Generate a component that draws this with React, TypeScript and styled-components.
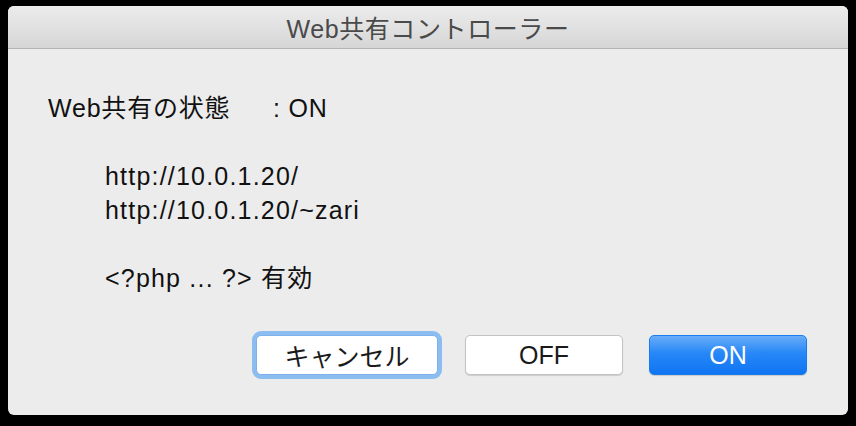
import React from "react";
import styled, { createGlobalStyle } from "styled-components";

const Global = createGlobalStyle`
  html, body { margin: 0; padding: 0; background: #000; }
  body { width: 856px; height: 426px; overflow: hidden; }
  #root { width: 856px; height: 426px; }
`;

const FONT = `"Liberation Sans", "Noto Sans CJK JP", sans-serif`;

const Stage = styled.div`
  width: 856px;
  height: 426px;
  background: #000;
  padding: 6px 8px 11px 8px;
  box-sizing: border-box;
  display: flex;
`;

const Window = styled.div`
  flex: 1;
  display: flex;
  flex-direction: column;
  background: #ececec;
  border-radius: 6px;
  overflow: hidden;
  font-family: ${FONT};
`;

const TitleBar = styled.div`
  height: 42px;
  flex: none;
  display: flex;
  align-items: center;
  justify-content: center;
  background: linear-gradient(#ececec, #d6d6d6);
  border-bottom: 1px solid #b4b4b4;
  color: #4a4a4a;
  font-size: 25px;
  letter-spacing: 0.6px;
`;

const Body = styled.div`
  flex: 1;
  display: flex;
  flex-direction: column;
  padding: 42px 0 0 40px;
  color: #111;
  font-size: 25px;
  letter-spacing: 0.8px;
`;

const Line = styled.div<{ $indent?: boolean }>`
  height: 34px;
  line-height: 34px;
  white-space: pre;
  padding-left: ${(p) => (p.$indent ? "57px" : "0")};
  letter-spacing: ${(p) => (p.$indent ? "1.2px" : "0.8px")};
  display: flex;
`;

const StatusLabel = styled.span`
  width: 225px;
`;

const ButtonRow = styled.div`
  display: flex;
  justify-content: flex-end;
  align-items: center;
  gap: 26px;
  padding-right: 41px;
  margin-top: 40px;
`;

const Button = styled.button<{ $variant?: "default" | "focus" | "primary" }>`
  font-family: ${FONT};
  font-size: 25px;
  height: 40px;
  width: ${(p) => (p.$variant === "focus" ? "182px" : "158px")};
  margin-left: ${(p) => (p.$variant === "default" || !p.$variant ? "1px" : "0")};
  border-radius: 5px;
  box-sizing: border-box;
  padding: 0;
  display: flex;
  align-items: center;
  justify-content: center;
  color: ${(p) => (p.$variant === "primary" ? "#fff" : "#1a1a1a")};
  border: 1px solid
    ${(p) => (p.$variant === "primary" ? "#1b7cf0" : p.$variant === "focus" ? "#7fb2ec" : "#c3c3c3")};
  background: ${(p) =>
    p.$variant === "primary" ? "linear-gradient(#68adf9, #2787f7 45%, #0f75f2)" : "#fff"};
  box-shadow: ${(p) =>
    p.$variant === "focus"
      ? "0 0 0 4px #8cbdf1"
      : p.$variant === "primary"
      ? "0 1px 1px rgba(0,0,0,0.15)"
      : "0 1px 1px rgba(0,0,0,0.14)"};
`;

export default function App() {
  return (
    <>
      <Global />
      <Stage>
        <Window>
          <TitleBar>Web共有コントローラー</TitleBar>
          <Body>
            <Line>
              <StatusLabel>Web共有の状態</StatusLabel>
              <span>: ON</span>
            </Line>
            <Line />
            <Line $indent>http://10.0.1.20/</Line>
            <Line $indent>http://10.0.1.20/~zari</Line>
            <Line />
            <Line $indent>&lt;?php ... ?&gt; 有効</Line>
            <ButtonRow>
              <Button $variant="focus">キャンセル</Button>
              <Button>OFF</Button>
              <Button $variant="primary">ON</Button>
            </ButtonRow>
          </Body>
        </Window>
      </Stage>
    </>
  );
}
